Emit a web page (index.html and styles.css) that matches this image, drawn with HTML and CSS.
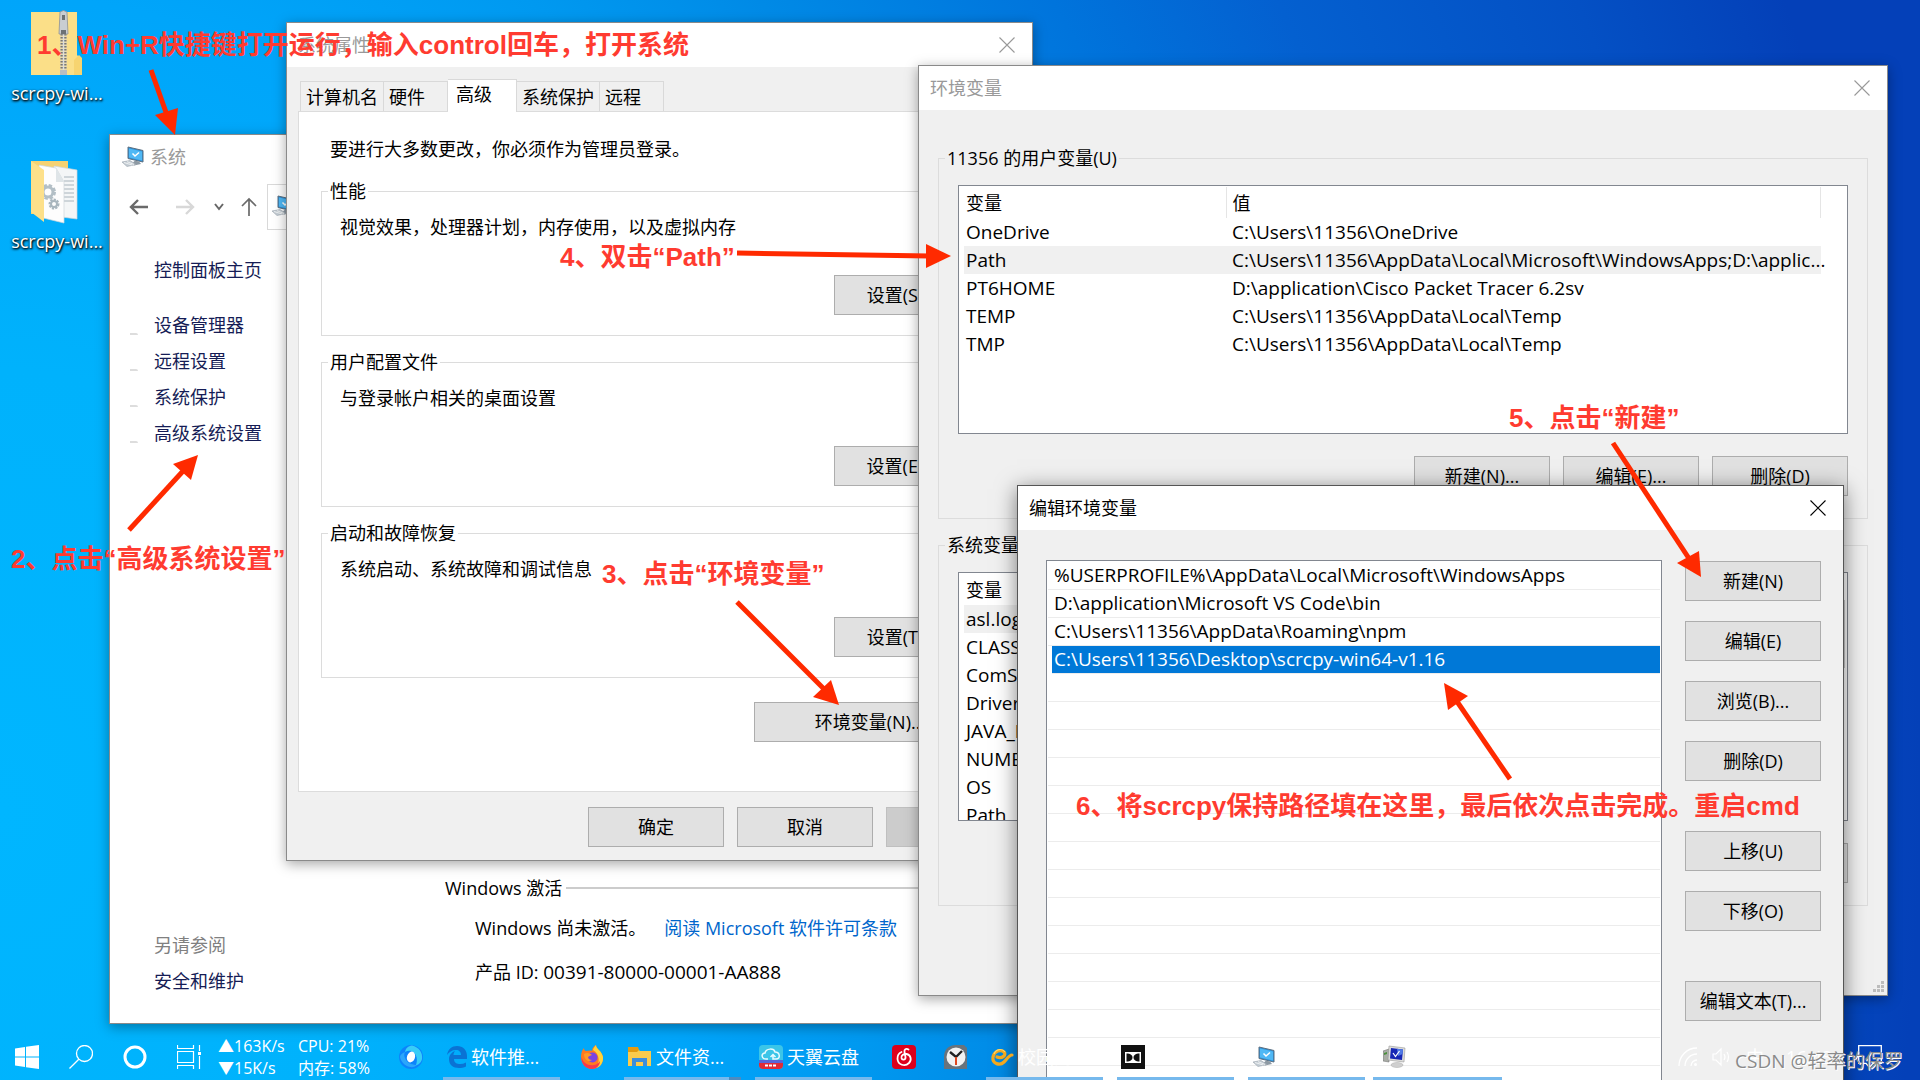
FILE: index.html
```html
<!DOCTYPE html>
<html lang="zh-CN">
<head>
    <meta charset="UTF-8">
    <meta name="viewport" content="width=device-width, initial-scale=1.0">
    <title>环境变量</title>
    <link rel="stylesheet" href="styles.css">
</head>
<body>
    <!-- shared icons -->
    <svg class="defs" width="0" height="0" aria-hidden="true">
        <symbol id="icon-close" viewBox="0 0 16 16">
            <path d="M0.5 0.5L15.5 15.5M15.5 0.5L0.5 15.5" fill="none" stroke="currentColor" stroke-width="1.1"/>
        </symbol>
        <symbol id="icon-pc" viewBox="0 0 24 22">
            <path d="M7 1L22 4.5V16L7 12.5Z" fill="#2d8fd6" stroke="#5b6f80"/>
            <path d="M8 2.4L21 5.4V14.6L8 11.6Z" fill="#4fb8f5"/>
            <path d="M11.5 7.5L14 10L18 6.5" fill="none" stroke="#fff" stroke-width="1.5"/>
            <path d="M14 14.5L18 15.5L20 18L13 19.5L11 17.5Z" fill="#8d99a3"/>
            <path d="M1 16L9 14.5L15 18.5L6 20.5Z" fill="#c3ccd3" stroke="#98a3ac" stroke-width="0.6"/>
            <path d="M3 16.5L11 19M6 15.6L13 18.5" stroke="#fff" stroke-width="0.7"/>
        </symbol>
    </svg>

    <main class="desktop">
        <a href="#" class="shortcut shortcut-zip">
            <svg width="54" height="66" viewBox="0 0 54 66">
                <path d="M1 2H47V45L52 50V65H1Z" fill="#fbdf88"/>
                <path d="M44 65V50L49 45L52 48V65Z" fill="#f7d470"/>
                <rect x="30" y="2" width="7" height="63" fill="#e9d9a8"/>
                <path d="M33.500 24V62" stroke="#777" stroke-width="6" stroke-dasharray="1.500 1.500"/>
                <path d="M33.500 24V62" stroke="#ddd" stroke-width="1.500"/>
                <path d="M30 2Q33.500 -1 37 2L38 24H29Z" fill="#c9cdd1" stroke="#8d9296" stroke-width="0.8"/>
                <rect x="32" y="5" width="3" height="5" fill="#6c7175"/>
                <rect x="31" y="20" width="5" height="4" fill="#6c7175"/>
                <rect x="30" y="60" width="7" height="5" fill="#b9bdc1"/>
            </svg>
            <span>scrcpy-wi...</span>
        </a>
        <a href="#" class="shortcut shortcut-folder">
            <svg width="54" height="64" viewBox="0 0 54 64">
                <path d="M1 1H38V54H1Z" fill="#f5d272"/>
                <path d="M24 6L47 10V59L24 56Z" fill="#f4f6f7" stroke="#cfd6da" stroke-width="0.7"/>
                <path d="M34 17H44M34 21H44M34 25H44M34 29H44M34 33H44M34 37H44M34 41H44" stroke="#a8b4bc"/>
                <path d="M9 5L26 8L34 22V63L9 57Z" fill="#fdfdfd" stroke="#cfd6da" stroke-width="0.7"/>
                <path d="M26 8L26 22H34Z" fill="#dfe5e8"/>
                <circle cx="18" cy="32" r="6" fill="none" stroke="#b3bfc6" stroke-width="4" stroke-dasharray="3 1.700"/>
                <circle cx="18" cy="32" r="5" fill="none" stroke="#b3bfc6" stroke-width="3"/>
                <circle cx="24" cy="44" r="4" fill="none" stroke="#a9b6be" stroke-width="3" stroke-dasharray="2 1"/>
                <circle cx="24" cy="44" r="3" fill="none" stroke="#a9b6be" stroke-width="2"/>
                <path d="M1 1L14 10V62L1 52Z" fill="#fde08a"/>
            </svg>
            <span>scrcpy-wi...</span>
        </a>

        <!-- System -->
        <section class="window system">
            <header class="titlebar">
                <svg width="24" height="22"><use href="#icon-pc"/></svg>
                <h2>系统</h2>
            </header>
            <nav class="toolbar">
                <button type="button" class="back" aria-label="后退"><svg width="20" height="18" viewBox="0 0 20 18"><path d="M19 9H2M9 2L2 9L9 16" fill="none" stroke="#6a6a6a" stroke-width="2.400"/></svg></button>
                <button type="button" class="forward" aria-label="前进"><svg width="20" height="18" viewBox="0 0 20 18"><path d="M1 9H18M11 2L18 9L11 16" fill="none" stroke="#d8d8d8" stroke-width="2.400"/></svg></button>
                <button type="button" class="small" aria-label="最近"><svg width="10" height="8" viewBox="0 0 10 8"><path d="M1 1L5 6L9 1" fill="none" stroke="#666" stroke-width="2"/></svg></button>
                <button type="button" class="small" aria-label="向上"><svg width="16" height="20" viewBox="0 0 16 20"><path d="M8 19V2M1 9L8 2L15 9" fill="none" stroke="#6a6a6a" stroke-width="1.700"/></svg></button>
                <div class="address"><svg width="24" height="22"><use href="#icon-pc"/></svg></div>
            </nav>
            <div class="system-body">
                <aside class="side">
                    <a href="#" class="home">控制面板主页</a>
                    <a href="#" class="shield">设备管理器</a>
                    <a href="#" class="shield">远程设置</a>
                    <a href="#" class="shield">系统保护</a>
                    <a href="#" class="shield">高级系统设置</a>
                    <span class="see-also">另请参阅</span>
                    <a href="#">安全和维护</a>
                </aside>
                <div class="activation">
                    <h3>Windows 激活</h3>
                    <p>Windows 尚未激活。<a href="#">阅读 Microsoft 软件许可条款</a></p>
                    <p>产品 ID: <span class="product-id">00391-80000-00001-AA888</span></p>
                </div>
            </div>
        </section>

        <!-- System properties -->
        <section class="window properties">
            <header class="titlebar">
                <h2>系统属性</h2>
                <button type="button" class="close" aria-label="关闭"><svg width="16" height="16"><use href="#icon-close"/></svg></button>
            </header>
            <div class="tabs">
                <button type="button" class="tab">计算机名</button>
                <button type="button" class="tab tab-short">硬件</button>
                <button type="button" class="tab active">高级</button>
                <button type="button" class="tab">系统保护</button>
                <button type="button" class="tab tab-short">远程</button>
            </div>
            <div class="tab-page">
                <p class="notice">要进行大多数更改，你必须作为管理员登录。</p>
                <fieldset class="group">
                    <legend>性能</legend>
                    <p>视觉效果，处理器计划，内存使用，以及虚拟内存</p>
                    <button type="button" class="btn">设置(S)...</button>
                </fieldset>
                <fieldset class="group">
                    <legend>用户配置文件</legend>
                    <p>与登录帐户相关的桌面设置</p>
                    <button type="button" class="btn">设置(E)...</button>
                </fieldset>
                <fieldset class="group">
                    <legend>启动和故障恢复</legend>
                    <p>系统启动、系统故障和调试信息</p>
                    <button type="button" class="btn">设置(T)...</button>
                </fieldset>
                <button type="button" class="btn btn-env">环境变量(N)...</button>
            </div>
            <footer class="actions">
                <button type="button" class="btn">确定</button>
                <button type="button" class="btn">取消</button>
                <button type="button" class="btn" disabled>应用(A)</button>
            </footer>
        </section>

        <!-- Environment variables -->
        <section class="window variables">
            <header class="titlebar">
                <h2>环境变量</h2>
                <button type="button" class="close" aria-label="关闭"><svg width="16" height="16"><use href="#icon-close"/></svg></button>
            </header>
            <div class="variables-body">
                <fieldset class="var-group">
                    <legend>11356 的用户变量(U)</legend>
                    <div class="listview">
                        <table>
                            <thead>
                                <tr><th class="name">变量</th><th>值</th></tr>
                            </thead>
                            <tbody>
                                <tr><td>OneDrive</td><td>C:\Users\11356\OneDrive</td></tr>
                                <tr class="current"><td>Path</td><td>C:\Users\11356\AppData\Local\Microsoft\WindowsApps;D:\applic...</td></tr>
                                <tr><td>PT6HOME</td><td>D:\application\Cisco Packet Tracer 6.2sv</td></tr>
                                <tr><td>TEMP</td><td>C:\Users\11356\AppData\Local\Temp</td></tr>
                                <tr><td>TMP</td><td>C:\Users\11356\AppData\Local\Temp</td></tr>
                            </tbody>
                        </table>
                    </div>
                    <div class="row-actions">
                        <button type="button" class="btn">新建(N)...</button>
                        <button type="button" class="btn">编辑(E)...</button>
                        <button type="button" class="btn">删除(D)</button>
                    </div>
                </fieldset>
                <fieldset class="var-group">
                    <legend>系统变量(S)</legend>
                    <div class="listview">
                        <table>
                            <thead>
                                <tr><th class="name">变量</th><th>值</th></tr>
                            </thead>
                            <tbody>
                                <tr class="current"><td>asl.log</td><td></td></tr>
                                <tr><td>CLASSPATH</td><td></td></tr>
                                <tr><td>ComSpec</td><td></td></tr>
                                <tr><td>DriverData</td><td></td></tr>
                                <tr><td>JAVA_HOME</td><td></td></tr>
                                <tr><td>NUMBER_OF_PROCESSORS</td><td></td></tr>
                                <tr><td>OS</td><td></td></tr>
                                <tr><td>Path</td><td></td></tr>
                            </tbody>
                        </table>
                        <div class="scrollbar"></div>
                    </div>
                    <div class="row-actions">
                        <button type="button" class="btn">新建(W)...</button>
                        <button type="button" class="btn">编辑(I)...</button>
                        <button type="button" class="btn">删除(L)</button>
                    </div>
                </fieldset>
            </div>
            <svg class="grip" width="12" height="12" viewBox="0 0 12 12">
                <path d="M9 0h3v3h-3zM9 4h3v3h-3zM5 4h3v3h-3zM9 8h3v3h-3zM5 8h3v3h-3zM1 8h3v3h-3z" fill="#bcbcbc"/>
            </svg>
        </section>

        <!-- Edit environment variable -->
        <section class="window edit">
            <header class="titlebar">
                <h2>编辑环境变量</h2>
                <button type="button" class="close" aria-label="关闭"><svg width="16" height="16"><use href="#icon-close"/></svg></button>
            </header>
            <div class="edit-body">
                <ul class="paths">
                    <li>%USERPROFILE%\AppData\Local\Microsoft\WindowsApps</li>
                    <li>D:\application\Microsoft VS Code\bin</li>
                    <li>C:\Users\11356\AppData\Roaming\npm</li>
                    <li class="selected">C:\Users\11356\Desktop\scrcpy-win64-v1.16</li>
                    <li></li><li></li><li></li><li></li><li></li>
                    <li></li><li></li><li></li><li></li><li></li>
                    <li></li><li></li><li></li><li></li><li></li>
                </ul>
                <div class="edit-actions">
                    <button type="button" class="btn">新建(N)</button>
                    <button type="button" class="btn">编辑(E)</button>
                    <button type="button" class="btn">浏览(B)...</button>
                    <button type="button" class="btn">删除(D)</button>
                    <button type="button" class="btn spaced">上移(U)</button>
                    <button type="button" class="btn">下移(O)</button>
                    <button type="button" class="btn spaced">编辑文本(T)...</button>
                </div>
            </div>
        </section>
    </main>

    <footer class="taskbar">
        <button type="button" class="task" aria-label="开始">
            <svg width="24" height="24" viewBox="0 0 24 24"><path d="M0 3.500L10 2V11.500H0ZM11 1.800L24 0V11.500H11ZM0 12.500H10V22L0 20.500ZM11 12.500H24V24L11 22.200Z" fill="#fff"/></svg>
        </button>
        <button type="button" class="task" aria-label="搜索">
            <svg width="24" height="24" viewBox="0 0 24 24"><circle cx="15.500" cy="8.500" r="8" fill="none" stroke="#fff" stroke-width="1.300"/><path d="M9.800 14.200L0.500 23.500" stroke="#fff" stroke-width="1.300"/></svg>
        </button>
        <button type="button" class="task" aria-label="Cortana">
            <svg width="24" height="24" viewBox="0 0 24 24"><circle cx="12" cy="12" r="10" fill="none" stroke="#fff" stroke-width="3"/></svg>
        </button>
        <button type="button" class="task" aria-label="任务视图">
            <svg width="24" height="24" viewBox="0 0 24 24"><path d="M0.500 0V3.500H16.500V0M0.500 24V20.500H16.500V24M0.500 6.500H16.500V17.500H0.500ZM22.500 0V6M22.500 11V24" fill="none" stroke="#fff" stroke-width="1.200"/><rect x="21" y="7" width="3" height="3" fill="#fff"/></svg>
        </button>
        <div class="meter">
            <span>▲163K/s</span><span>CPU: 21%</span>
            <span>▼15K/s</span><span>内存: 58%</span>
        </div>
        <button type="button" class="task" aria-label="浏览器">
            <svg width="24" height="24" viewBox="0 0 24 24"><circle cx="12" cy="12" r="12" fill="#0d84fb"/><path d="M13 0.500C20 2 24 8 23 14C22 18 19 20 17 20C19 15 18 8 12 6C10 5.500 8 6 6 7C7 3 9 1 13 0.500Z" fill="#38cdf7"/><path d="M1 12C2 17 6 21 11 22C14 22.500 17 21.500 18 20C13 20 8 18 6 13C5 11 5 9 6 7C3 8 1 10 1 12Z" fill="#2ba6fb"/><ellipse cx="12" cy="12" rx="4" ry="5.500" fill="#fff" transform="rotate(18 12 12)"/></svg>
        </button>
        <button type="button" class="task wide">
            <svg width="20" height="22" viewBox="0 0 20 22"><path d="M0 9C1 3 5 0 10 0C16 0 20 4 20 10V13H7C7 17 10 18 13 18C15 18 17 17.500 19 16.500V20.500C17 21.500 14 22 12 22C6 22 2 19 2 13C2 9 5 6 8 5C7 6 6.500 8 6.500 9H14C14 6 12 4 9 4C5 4 2 6 0 9Z" fill="#0a73d4"/></svg>
            <span>软件推...</span>
        </button>
        <button type="button" class="task" aria-label="Firefox">
            <svg width="24" height="24" viewBox="0 0 24 24"><path d="M1 12C1 8 2 5 4 3C4 5 5 6 6 6C8 6 11 5 12 6C12 3 14 1 16 0C16 4 22 6 23 12C24 19 18 24 12 24C6 24 1 19 1 12Z" fill="#ff7a1f"/><path d="M16 0C16 4 22 6 23 12C23.500 18 20 22 16 23C20 18 20 9 13 5C13.500 3 15 1 16 0Z" fill="#ffd43a"/><path d="M1.500 12C3 18 8 21 14 20C17 19.500 19 18 20 16C20 20 17 24 12 24C6 24 1 19 1.500 12Z" fill="#f5394e"/><circle cx="12.500" cy="12.500" r="5" fill="#7a45e0"/><path d="M4 9C7 7 10 8 12 10C10 11 9 11 8 12C8 14 10 15 12 15C8 18 4 14 4 9Z" fill="#ff9a28"/></svg>
        </button>
        <button type="button" class="task wide stacked">
            <svg width="24" height="22" viewBox="0 0 24 22"><path d="M0 2H9L12 5H23V20H0Z" fill="#fbcb4c"/><path d="M0 1H10L11 4L9 6H0Z" fill="#e39b10"/><path d="M4 20V12H19V20H15V16H8V20Z" fill="#3d8edb"/></svg>
            <span>文件资...</span>
        </button>
        <button type="button" class="task wide">
            <svg width="24" height="24" viewBox="0 0 24 24"><rect width="24" height="24" rx="4" fill="#3bc5e8"/><path d="M0 15H24V19H0Z" fill="#5866d8"/><path d="M0 18H24V20Q24 24 20 24H4Q0 24 0 20Z" fill="#e02b35"/><path d="M6 20.500H18" stroke="#fff" stroke-width="2" stroke-dasharray="3 1"/><path d="M9 14H7C2 14 2 8 6 8C7 3 15 3 16 7C21 7 22 14 17 14H14V10M11.500 12L14 9.500L16.500 12" fill="none" stroke="#e8fbff" stroke-width="1.500"/></svg>
            <span>天翼云盘</span>
        </button>
        <button type="button" class="task" aria-label="音乐">
            <svg width="24" height="24" viewBox="0 0 24 24"><rect width="24" height="24" rx="4" fill="#dd001b"/><path d="M16.500 4.500C14 3 12 4.500 12.500 7L13.500 12C14 15 10 15.500 9.500 13C9 10 12 8.500 14.500 9C19 10 20 15 17 18C13 22 6 20 5.500 14C5.300 10 7 8 9.500 7" fill="none" stroke="#fff" stroke-width="1.800" stroke-linecap="round"/></svg>
        </button>
        <button type="button" class="task clock" aria-label="时钟">
            <svg width="24" height="24" viewBox="0 0 24 24"><path d="M0 24V12C0 4 5 0 12 0H20L23 3V24Z" fill="#69737c"/><circle cx="12" cy="12" r="9.500" fill="#f2f2f2"/><path d="M6 7L12 12L18 6" fill="none" stroke="#222" stroke-width="2.400"/><path d="M12 12V20" stroke="#e0481f" stroke-width="2"/></svg>
        </button>
        <button type="button" class="task wide">
            <svg width="24" height="22" viewBox="0 0 24 22"><path d="M7 11C12 13 17 9 14 6C11 3 4 5 3 11C2 18 10 20 14 16C17 13 19 9 22 9" fill="none" stroke="#f3a81f" stroke-width="3.200" stroke-linecap="round"/><path d="M4 8C6 3 12 2 15 6" fill="none" stroke="#ffd767" stroke-width="1.200"/></svg>
            <span>校园网</span>
        </button>
        <button type="button" class="task wide" aria-label="Dolby">
            <svg width="24" height="24" viewBox="0 0 24 24"><rect width="24" height="24" fill="#111"/><rect x="4" y="7" width="16" height="11" fill="#fff"/><path d="M5.500 8.500H7C13 9 13 16 7 16.500H5.500ZM18.500 8.500H17C11 9 11 16 17 16.500H18.500Z" fill="#111"/></svg>
        </button>
        <button type="button" class="task wide" aria-label="系统">
            <svg width="24" height="22"><use href="#icon-pc"/></svg>
        </button>
        <button type="button" class="task wide last" aria-label="系统属性">
            <svg width="24" height="24" viewBox="0 0 24 24"><path d="M0 6L6 4V17L0 16Z" fill="#a9ada6" stroke="#777" stroke-width="0.600"/><path d="M1 8L4 7V9L1 10Z" fill="#4a8f3c"/><path d="M6 1L22 3L21 17L5 15Z" fill="#dcdcda" stroke="#999" stroke-width="0.600"/><path d="M8 3L20 4.500L19 15L7 13.500Z" fill="#1727b5"/><path d="M14 3.700L20 4.500L19.600 9L15 11Z" fill="#4f79e6"/><path d="M10 8L12.500 11.500L16.500 6" fill="none" stroke="#fff" stroke-width="1.200"/><ellipse cx="14" cy="20" rx="6" ry="2.500" fill="#cfcfcf" stroke="#aaa" stroke-width="0.500"/></svg>
        </button>
        <div class="tray">
            <svg width="20" height="20" viewBox="0 0 20 20"><path d="M1 19A18 18 0 0 1 19 1M7 19A12 12 0 0 1 19 7M13 19A6 6 0 0 1 19 13" fill="none" stroke="#fff" stroke-width="1.300"/><circle cx="17.500" cy="17.500" r="1.500" fill="#fff"/></svg>
            <svg width="20" height="20" viewBox="0 0 20 20"><path d="M1 7H4L9 2V18L4 13H1ZM12 7Q14 10 12 13M15 5Q18 10 15 15" fill="none" stroke="#fff" stroke-width="1.200"/></svg>
            <span>中</span>
            <span class="time">16:43</span>
            <svg class="notify" width="24" height="24" viewBox="0 0 24 24"><path d="M0.700 0.700H23.300V18.300H15L11.500 22.500L8 18.300H0.700Z" fill="none" stroke="#fff" stroke-width="1.300"/></svg>
        </div>
    </footer>

    <!-- step notes and arrows drawn over the desktop -->
    <div class="notes">
        <svg class="arrows" width="1920" height="1080" viewBox="0 0 1920 1080">
            <g stroke="#ff2a00" stroke-width="5">
                <path d="M151 70L168 118"/>
                <path d="M129 530L184 470"/>
                <path d="M737 602L825 690"/>
                <path d="M737 253L930 256"/>
                <path d="M1613 443L1690 560"/>
                <path d="M1510 779L1456 700"/>
            </g>
            <g fill="#ff2a00">
                <path d="M175 135L155 115L178 108Z"/>
                <path d="M198 455L173 464L191 480Z"/>
                <path d="M839 705L813 697L831 680Z"/>
                <path d="M951 256L926 244V268Z"/>
                <path d="M1701 577L1677 563L1699 551Z"/>
                <path d="M1444 683L1448 710L1468 696Z"/>
            </g>
        </svg>
        <p class="note step-1">1、Win+R快捷键打开运行，输入control回车，打开系统</p>
        <p class="note step-2">2、点击“高级系统设置”</p>
        <p class="note step-3">3、点击“环境变量”</p>
        <p class="note step-4">4、双击“Path”</p>
        <p class="note step-5">5、点击“新建”</p>
        <p class="note step-6">6、将scrcpy保持路径填在这里，最后依次点击完成。重启cmd</p>
        <p class="watermark">CSDN @轻率的保罗</p>
    </div>
</body>
</html>
```
FILE: styles.css
```css
* {
    box-sizing: border-box;
}

body {
    margin: 0;
    height: 100vh;
    position: relative;
    overflow: hidden;
    font-family: "Open Sans", "Noto Sans CJK SC", sans-serif;
    font-size: 18px;
    line-height: 24px;
    color: #000;
    background: radial-gradient(1920px 2200px at 0 75%, #00b6ff 0, #00b2fc 20%, #00a5fa 37%, #0099f0 46%, #008ae6 54%, #0074dc 66%, #0460d0 76%, #0450c4 90%, #0440b8 100%);
}

h2, h3, p, ul {
    margin: 0;
    padding: 0;
    font-size: 18px;
    font-weight: normal;
}

button {
    font: inherit;
    color: inherit;
    background: none;
    border: none;
    padding: 0;
}

a {
    text-decoration: none;
}

svg {
    flex: none;
    display: block;
}

.defs {
    position: absolute;
}

/* desktop shortcuts */
.shortcut {
    position: absolute;
    left: 0;
    width: 114px;
    display: flex;
    flex-direction: column;
    align-items: center;
    gap: 5px;
    color: #fff;
    text-shadow: 1px 1px 2px #000, 0 1px 3px #000;
}

.shortcut-zip {
    top: 10px;
}

.shortcut-folder {
    top: 160px;
}

/* windows */
.window {
    position: absolute;
    display: flex;
    flex-direction: column;
    border: 1px solid #8a8a8a;
    background: #f0f0f0;
    box-shadow: 0 3px 12px rgba(0, 0, 0, 0.35);
}

.titlebar {
    display: flex;
    align-items: center;
    height: 44px;
    padding: 0 17px 1px 11px;
    background: #fff;
    color: #999;
    flex: none;
}

.close {
    margin-left: auto;
    width: 16px;
    height: 16px;
}

.btn {
    width: 136px;
    height: 40px;
    background: #e1e1e1;
    border: 1px solid #adadad;
    white-space: nowrap;
}

.btn:disabled {
    background: #ccc;
    border-color: #bfbfbf;
    color: #838383;
}

/* system window */
.system {
    left: 109px;
    top: 134px;
    width: 1092px;
    height: 890px;
    background: #fff;
}

.system .titlebar {
    gap: 5px;
}

.toolbar {
    display: flex;
    align-items: center;
    height: 46px;
    margin: 5px 0 0 18px;
}

.toolbar button svg {
    margin-left: 1px;
}

.toolbar .back {
    width: 46px;
}

.toolbar .forward {
    width: 39px;
}

.toolbar .small {
    width: 27px;
}

.address {
    flex: 1;
    height: 46px;
    border: 1px solid #d9d9d9;
    padding: 10px 3px;
}

.system-body {
    display: flex;
    flex: 1;
}

.side {
    display: flex;
    flex-direction: column;
    gap: 12px;
    width: 290px;
    padding: 28px 0 30px 44px;
}

.side a {
    color: #151c55;
}

.side .home {
    margin-bottom: 19px;
}

.shield::before {
    content: "";
    float: left;
    width: 8px;
    height: 2px;
    margin: 20px 0 0 -24px;
    background: #ddd;
    border-radius: 0 2px 0 0;
}

.see-also {
    margin-top: auto;
    color: #808080;
}

.activation {
    flex: 1;
    align-self: flex-end;
    padding: 0 0 39px 45px;
}

.activation h3 {
    display: flex;
    align-items: center;
    gap: 4px;
    margin-bottom: 16px;
}

.activation h3::after {
    content: "";
    flex: 1;
    height: 2px;
    background: #ccc;
}

.activation p {
    margin: 0 0 20px 30px;
}

.activation p a {
    color: #0066cc;
    margin-left: 18px;
}

.activation p:last-child {
    margin-bottom: 0;
}

/* system properties */
.properties {
    left: 286px;
    top: 22px;
    width: 747px;
    height: 839px;
}

.tabs {
    display: flex;
    align-items: flex-end;
    margin: 12px 12px 0 13px;
}

.tab {
    height: 30px;
    padding: 0 5px;
    border: 1px solid #d9d9d9;
    border-width: 1px 1px 0 0;
    text-align: left;
}

.tab:first-child {
    border-left-width: 1px;
}

.tab-short {
    width: 64px;
}

.tab.active {
    width: 69px;
    height: 33px;
    margin-bottom: -1px;
    padding: 0 8px 4px;
    background: #fff;
    z-index: 1;
}

.tab-page {
    flex: 1;
    display: flex;
    flex-direction: column;
    margin: 0 12px 0 11px;
    padding: 25px 22px;
    border: 1px solid #dcdcdc;
    background: #fff;
}

.notice {
    margin: 0 0 18px 9px;
}

.group {
    display: flex;
    flex-direction: column;
    height: 157px;
    margin: 0 0 14px;
    padding: 12px 26px 20px 18px;
    border: 1px solid #dcdcdc;
}

.group legend {
    margin-left: -12px;
    padding: 0 2px;
}

.group .btn {
    align-self: flex-end;
    margin-top: 36px;
}

.btn-env {
    width: 232px;
    align-self: flex-end;
    margin: 10px 11px 0 0;
}

.actions {
    display: flex;
    justify-content: flex-end;
    gap: 13px;
    padding: 15px 10px 13px;
}

/* environment variables */
.variables {
    left: 918px;
    top: 65px;
    width: 970px;
    height: 931px;
}

.variables-body {
    padding: 36px 19px 0 19px;
}

.var-group {
    height: 373px;
    margin: 0 0 14px;
    padding: 15px 19px 0;
    border: 1px solid #dcdcdc;
}

.var-group legend {
    margin-left: -13px;
    padding: 0 2px;
}

.listview {
    display: flex;
    align-items: flex-start;
    height: 249px;
    overflow: hidden;
    padding: 1px 0 0 5px;
    border: 1px solid #828790;
    background: #fff;
}

.listview table {
    flex: none;
    width: 857px;
    border-collapse: collapse;
    table-layout: fixed;
}

.listview th, .listview td {
    height: 28px;
    padding: 0 0 0 6px;
    font-weight: normal;
    text-align: left;
    white-space: nowrap;
}

.listview th {
    height: 31px;
    border-right: 1px solid #e5e5e5;
}

.listview td:first-child, .listview .name {
    padding-left: 2px;
}

.listview .name {
    width: 262px;
}

.listview td, .paths, .product-id {
    font-size: 19px;
}

.current {
    background: #f0f0f0;
}

.scrollbar {
    width: 17px;
    height: 68px;
    margin: 26px 2px 0 auto;
    background: #cdcdcd;
}

.row-actions {
    display: flex;
    justify-content: flex-end;
    gap: 13px;
    padding-top: 22px;
}

.grip {
    position: absolute;
    right: 3px;
    bottom: 2px;
}

/* edit environment variable */
.edit {
    left: 1017px;
    top: 485px;
    width: 827px;
    height: 640px;
    border-color: #555;
    box-shadow: 0 4px 20px rgba(0, 0, 0, 0.5);
}

.edit .titlebar {
    color: #000;
}

.edit-body {
    display: flex;
    flex: 1;
    gap: 23px;
    padding: 30px 22px 0 28px;
}

.paths {
    flex: 1;
    list-style: none;
    border: 1px solid #828790;
    background: #fff;
    padding: 1px;
}

.paths li {
    height: 28px;
    line-height: 27px;
    padding-left: 6px;
    border-bottom: 1px solid #ececec;
}

.paths .selected {
    margin-left: 4px;
    padding-left: 2px;
    color: #fff;
    background: #0078d7;
}

.edit-actions {
    display: flex;
    flex-direction: column;
    gap: 20px;
    padding-top: 1px;
}

.edit-actions .spaced {
    margin-top: 30px;
}

/* taskbar */
.taskbar {
    position: absolute;
    left: 0;
    right: 0;
    bottom: 0;
    height: 46px;
    display: flex;
    color: #fff;
}

.task {
    width: 54px;
    flex: none;
    display: flex;
    align-items: center;
    justify-content: center;
}

.task.wide {
    width: 117px;
    margin: 0 5px;
    padding: 3px 4px 0;
    gap: 4px;
    justify-content: flex-start;
    border-bottom: 3px solid #76b9ed;
    white-space: nowrap;
}

.task.wide + .wide {
    margin-left: 9px;
}

.task.stacked {
    border-image: linear-gradient(to right, #76b9ed 103px, #4c8bc0 103px) 3;
}

.task.wide.last {
    width: 129px;
    margin-left: 3px;
    padding-left: 10px;
}

.task.clock {
    width: 50px;
}

.meter {
    display: grid;
    grid-template-columns: 80px 88px;
    align-content: center;
    padding-left: 2px;
    width: 168px;
    font-size: 16px;
    line-height: 22px;
    white-space: nowrap;
}

.tray {
    display: flex;
    align-items: center;
    gap: 14px;
    margin-left: auto;
    padding-right: 38px;
}

.time {
    margin-left: 8px;
}

.notify {
    margin-left: 12px;
}

/* step notes */
.notes {
    position: absolute;
    left: 0;
    top: 0;
    pointer-events: none;
}

.note {
    position: absolute;
    font-family: "Liberation Sans", "Noto Sans CJK SC", sans-serif;
    font-size: 26px;
    font-weight: bold;
    line-height: 32px;
    color: #ff3b30;
    white-space: nowrap;
}

.step-1 {
    left: 37px;
    top: 29px;
}

.step-2 {
    left: 11px;
    top: 543px;
}

.step-3 {
    left: 602px;
    top: 558px;
}

.step-4 {
    left: 560px;
    top: 241px;
}

.step-5 {
    left: 1509px;
    top: 402px;
}

.step-6 {
    left: 1076px;
    top: 790px;
}

.watermark {
    position: absolute;
    left: 1735px;
    top: 1049px;
    font-size: 19px;
    white-space: nowrap;
    color: #8a8a8a;
    text-shadow: 1px 1px 0 #fff;
}
```
